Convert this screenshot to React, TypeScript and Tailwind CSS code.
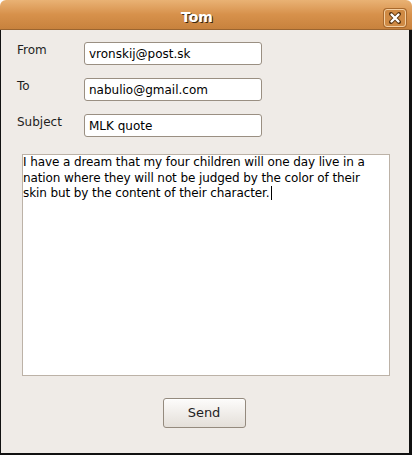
import React from 'react';

const font = { fontFamily: '"DejaVu Sans", Verdana, sans-serif' };

function Field({ label, value }: { label: string; value: string }) {
  return (
    <div className="flex items-start">
      <div className="w-[83px] pl-[16px] pt-[1px] text-[12px] leading-[15px] text-[#1e1e1e]">{label}</div>
      <div className="h-[23px] w-[178px] rounded-[3px] border border-[#9a8f82] bg-white pl-[4px] pt-[4px] text-[12px] leading-[15px] text-black">
        {value}
      </div>
    </div>
  );
}

export default function App() {
  return (
    <div className="h-[456px] w-[412px] bg-white" style={font}>
      <div className="flex h-[455px] flex-col">
        {/* title bar */}
        <div className="flex h-[30px] items-start rounded-t-[6px] border-b border-[#9b6530] bg-gradient-to-b from-[#e9b274] via-[#d7914b] to-[#c8823d] pl-[10px] pr-[6px] pt-[9px]">
          <div className="flex-1 text-center text-[14px] font-bold leading-[16px] text-white [text-shadow:1px_1px_0_#3d2810]">
            Tom
          </div>
          <div className="flex h-[18px] w-[22px] items-center justify-center rounded-[3px] border border-[#f3cfa3] bg-[#cf8a44] shadow-[0_0_0_1px_#a8692d]">
            <svg width="12" height="12" viewBox="0 0 12 12">
              <path d="M2 2 L10 10 M10 2 L2 10" stroke="#5a3510" strokeWidth="4" strokeLinecap="round" />
              <path d="M2.5 2.5 L9.5 9.5 M9.5 2.5 L2.5 9.5" stroke="#ffffff" strokeWidth="2.4" strokeLinecap="round" />
            </svg>
          </div>
        </div>

        {/* body */}
        <div className="flex flex-1 flex-col border-b-2 border-l border-r-[3px] border-[#111] bg-[#efebe7] pt-[12px]">
          <div className="flex flex-col gap-[13px]">
            <Field label="From" value="vronskij@post.sk" />
            <Field label="To" value="nabulio@gmail.com" />
            <Field label="Subject" value="MLK quote" />
          </div>

          <div className="ml-[21px] mt-[17px] h-[222px] w-[368px] border border-[#bcb2a7] bg-white text-[12px] leading-[15.5px] tracking-[-0.1px] text-black">
            I have a dream that my four children will one day live in a
            <br />
            nation where they will not be judged by the color of their
            <br />
            skin but by the content of their character.
            <span className="ml-[1px] inline-block h-[14px] w-[1px] bg-black align-[-3px]" />
          </div>

          <div className="mt-[22px] flex justify-center pr-[2px]">
            <button className="h-[30px] w-[83px] rounded-[3px] border border-[#948a7e] bg-gradient-to-b from-[#fdfcfb] to-[#e4dfd9] text-[13px] text-[#1e1e1e] shadow-[inset_0_1px_0_#ffffff]">
              Send
            </button>
          </div>
        </div>
      </div>
    </div>
  );
}
